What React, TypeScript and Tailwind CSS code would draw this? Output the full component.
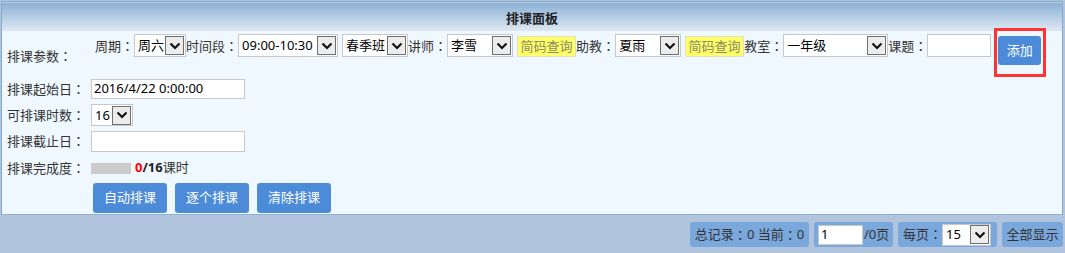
import React from "react";

const font = { fontFamily: '"Noto Sans", "Noto Sans CJK SC", sans-serif' };

function C() {
  return <span className="[font-family:'Noto_Sans_CJK_JP',sans-serif]">：</span>;
}

function T({ t }: { t: string }) {
  const parts = t.split("：");
  return (
    <>
      {parts.map((p, i) => (
        <React.Fragment key={i}>
          {p}
          {i < parts.length - 1 && <C />}
        </React.Fragment>
      ))}
    </>
  );
}

function Chevron() {
  return (
    <svg width="12" height="8" viewBox="0 0 12 8">
      <polyline points="1.5,1.5 6,6 10.5,1.5" fill="none" stroke="#111" strokeWidth="2.2" />
    </svg>
  );
}

function Select({ value, w, h = "h-[23px]" }: { value: string; w: string; h?: string }) {
  return (
    <div className={`${w} ${h} shrink-0 bg-white border border-[#c8c8c8] flex items-center justify-between pl-[3px] pr-px`}>
      <span className="text-[13px] text-black leading-none whitespace-nowrap">{value}</span>
      <div className="w-[19px] h-[19px] border border-[#707070] bg-[#ececec] flex items-center justify-center">
        <Chevron />
      </div>
    </div>
  );
}

function Lookup() {
  return (
    <div className="shrink-0 w-[59px] h-[21px] mt-[2px] bg-[#ffff66] border border-[#e0e0c0] flex items-center justify-center text-[13px] text-[#8a8a6a] leading-none">
      简码查询
    </div>
  );
}

function Label({ t }: { t: string }) {
  return (
    <span className="shrink-0 text-[13px] text-[#333] leading-[23px] whitespace-nowrap">
      <T t={t} />
    </span>
  );
}

function Btn({ t }: { t: string }) {
  return (
    <div className="w-[74px] h-[30px] rounded-[3px] bg-[#4c8bd7] text-white text-[13px] flex items-center justify-center">
      {t}
    </div>
  );
}

export default function App() {
  return (
    <div style={font} className="w-[1065px] h-[253px] bg-[#b0c4de] pl-px pt-px overflow-hidden [text-spacing-trim:space-all]">
      <div className="w-[1062px] border border-[#87a9c8] border-b-[#8fb0cc]">
        <div className="h-[29px] bg-gradient-to-b from-[#8cb1d7] to-[#dfe8f1] border-t border-t-[#b8cde2] flex items-center justify-center pt-[3px]">
          <span className="text-[13px] font-bold text-[#222]">排课面板</span>
        </div>
        <div className="bg-[#f0f8ff] h-[183px] pb-[2px] relative">
          {/* Row 1 */}
          <div className="h-[47px] flex">
            <div className="w-[93px] pl-[5px] flex items-center pt-[3px]">
              <span className="text-[13px] text-[#333]"><T t="排课参数：" /></span>
            </div>
            <div className="flex items-start pt-[3px]">
              <Label t="周期：" />
              <Select value="周六" w="w-[52px]" />
              <Label t="时间段：" />
              <Select value="09:00-10:30" w="w-[100px]" />
              <div className="w-[4px]" />
              <Select value="春季班" w="w-[66px]" />
              <Label t="讲师：" />
              <Select value="李雪" w="w-[66px]" />
              <div className="w-[4px]" />
              <Lookup />
              <Label t="助教：" />
              <Select value="夏雨" w="w-[66px]" />
              <div className="w-[4px]" />
              <Lookup />
              <Label t="教室：" />
              <Select value="一年级" w="w-[105px]" />
              <Label t="课题：" />
              <div className="w-[64px] h-[23px] bg-white border border-[#c8c8c8]" />
              <div className="relative ml-[7px] mt-[2px]">
                <div className="w-[43px] h-[29px] rounded-[3px] bg-[#4c8bd7] text-white text-[13px] flex items-center justify-center">
                  添加
                </div>
                <div className="absolute left-[-4px] top-[-8px] w-[52px] h-[49px] border-[3px] border-[#ff3333]" />
              </div>
            </div>
          </div>
          {/* Row 2 */}
          <div className="mt-px h-[20px] flex items-center">
            <div className="w-[89px] pl-[5px] text-[13px] text-[#333]"><T t="排课起始日：" /></div>
            <div className="w-[154px] h-[20px] bg-white border border-[#c8c8c8] flex items-center pl-[2px] text-[13px] text-black">
              2016/4/22 0:00:00
            </div>
          </div>
          {/* Row 3 */}
          <div className="mt-[5px] h-[22px] flex items-center">
            <div className="w-[89px] pl-[5px] text-[13px] text-[#333]"><T t="可排课时数：" /></div>
            <Select value="16" w="w-[42px]" h="h-[22px]" />
          </div>
          {/* Row 4 */}
          <div className="mt-[5px] h-[21px] flex items-center">
            <div className="w-[89px] pl-[5px] text-[13px] text-[#333]"><T t="排课截止日：" /></div>
            <div className="w-[154px] h-[21px] bg-white border border-[#c8c8c8]" />
          </div>
          {/* Row 5 */}
          <div className="mt-[6px] h-[20px] flex items-center">
            <div className="w-[89px] pl-[5px] text-[13px] text-[#333]"><T t="排课完成度：" /></div>
            <div className="w-[40px] h-[11px] bg-[#cccccc]" />
            <span className="ml-[4px] text-[13px] text-[#333]">
              <b className="text-[#ff0000]">0</b>
              <b className="text-[#222]">/16</b>课时
            </span>
          </div>
          {/* Row 6 */}
          <div className="mt-[5px] flex gap-[8px] pl-[91px]">
            <Btn t="自动排课" />
            <Btn t="逐个排课" />
            <Btn t="清除排课" />
          </div>
        </div>
      </div>
      {/* Footer */}
      <div className="mt-[7px] w-[1062px] flex justify-end gap-[5px] text-[13px] text-[#333]">
        <div className="h-[25px] w-[119px] rounded-[3px] bg-[#7aa7dc] flex items-center justify-center whitespace-nowrap">
          <T t="总记录：0 当前：0" />
        </div>
        <div className="h-[25px] w-[79px] rounded-[3px] bg-[#7aa7dc] flex items-center pl-[4px]">
          <div className="w-[45px] h-[20px] bg-white border border-[#c8c8c8] flex items-center pl-[2px] text-black">1</div>
          <span className="ml-[1px]">/0页</span>
        </div>
        <div className="h-[25px] w-[99px] rounded-[3px] bg-[#7aa7dc] flex items-center pl-[5px]">
          <span><T t="每页：" /></span>
          <Select value="15" w="w-[49px]" h="h-[22px]" />
        </div>
        <div className="h-[25px] w-[61px] rounded-[3px] bg-[#7aa7dc] flex items-center justify-center">全部显示</div>
      </div>
    </div>
  );
}
